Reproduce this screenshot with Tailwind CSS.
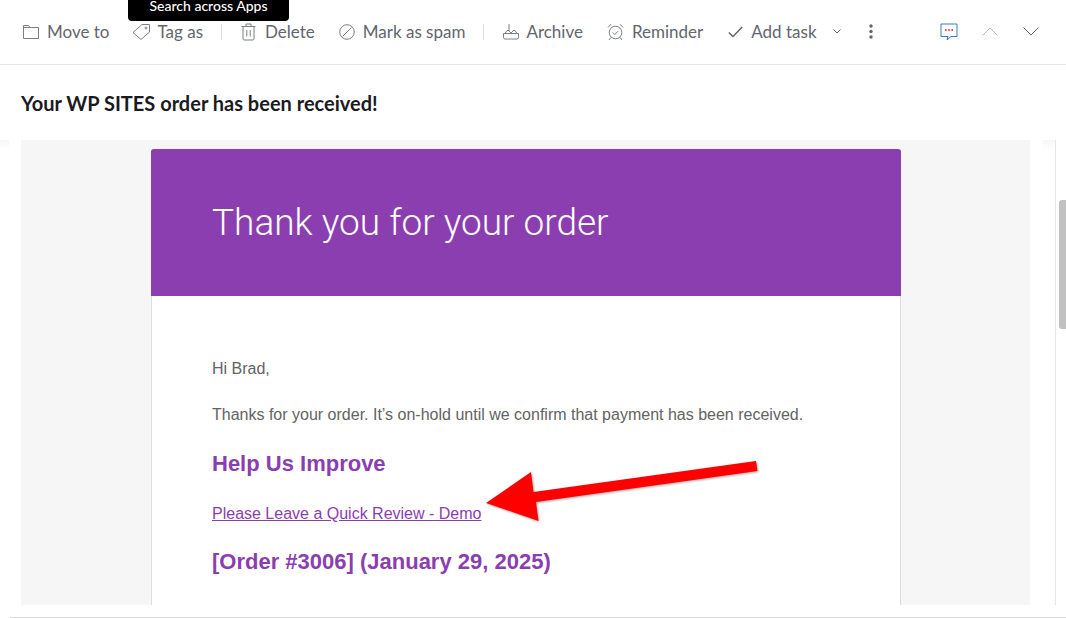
<!DOCTYPE html>
<html lang="en">
  <head>
    <meta charset="UTF-8" />
    <meta name="viewport" content="width=device-width, initial-scale=1.0" />
    <title>Your WP SITES order has been received!</title>
    <script src="https://cdn.jsdelivr.net/npm/@tailwindcss/browser@4"></script>
  </head>
  <body class="bg-white overflow-hidden font-['Lato',sans-serif]">
    <div class="relative w-[1066px] h-[618px] overflow-hidden">
      <!-- tooltip -->
      <div class="absolute left-[128px] top-[-10px] w-[161px] h-[31px] bg-black rounded-[4px] text-white text-[14px] font-medium flex items-center justify-center">
        Search across Apps
      </div>

      <!-- toolbar -->
      <div class="h-[65px] border-b border-[#e4e4e4] flex items-center pb-[1px] text-[17px] text-[#63656e] whitespace-nowrap">
        <svg class="ml-[23px] w-[16px] h-[16px]" viewBox="0 0 16 16" fill="none" stroke="#7d7f86" stroke-width="1"><path d="M.5 14.5V1.5h5l1.5 2h8.500v11z M.5 3.500H7"/></svg>
        <span class="ml-[8px]">Move to</span>
        <svg class="ml-[23px] w-[19px] h-[18px]" viewBox="0 0 19 18" fill="none" stroke="#7d7f86" stroke-width="1"><path d="M1 9.500 10 1.500h7.500v7.500L9 16.500Z"/><circle cx="14" cy="5" r="1"/></svg>
        <span class="ml-[6px]">Tag as</span>
        <div class="ml-[18px] w-[1px] h-[16px] bg-[#dcdcdc]"></div>
        <svg class="ml-[19px] w-[15px] h-[18px]" viewBox="0 0 15 18" fill="none" stroke="#7d7f86" stroke-width="1"><path d="M.5 3.500h14 M5 3.500V1h5v2.500 M2 3.500v12.500a1.200 1.200 0 0 0 1 1h9a1.200 1.200 0 0 0 1-1V3.500 M5.800 7v6.500 M9.200 7v6.500"/></svg>
        <span class="ml-[9px]">Delete</span>
        <svg class="ml-[24px] w-[16px] h-[16px]" viewBox="0 0 16 16" fill="none" stroke="#7d7f86" stroke-width="1"><circle cx="8" cy="8" r="7.300"/><path d="M3.500 12.500 12.500 3.500"/></svg>
        <span class="ml-[8px]">Mark as spam</span>
        <div class="ml-[18px] w-[1px] h-[16px] bg-[#dcdcdc]"></div>
        <svg class="ml-[19px] w-[16px] h-[17px]" viewBox="0 0 16 17" fill="none" stroke="#7d7f86" stroke-width="1"><path d="M.5 10.500h15v4a1.500 1.500 0 0 1-1.500 1.500H2a1.500 1.500 0 0 1-1.500-1.500z M2 10.500 4 7.500h2 M14 10.500 12 7.500h-2 M6 1v7l2 2 2-2 M6 1"/></svg>
        <span class="ml-[7px]">Archive</span>
        <svg class="ml-[24px] w-[17px] h-[18px]" viewBox="0 0 17 18" fill="none" stroke="#7d7f86" stroke-width="1"><circle cx="8.500" cy="9.500" r="6.300"/><path d="M1 4.500 4 1.200 M16 4.500 13 1.200 M3.800 14.500 2 17 M13.200 14.500 15 17 M5.800 9.500l2 2 3.500-3.500"/></svg>
        <span class="ml-[8px]">Reminder</span>
        <svg class="ml-[25px] w-[15px] h-[12px]" viewBox="0 0 15 12" fill="none" stroke="#63656e" stroke-width="1.500"><path d="M.8 6.500 5 10.500 14.200 1"/></svg>
        <span class="ml-[8px]">Add task</span>
        <svg class="ml-[16px] w-[8px] h-[5px]" viewBox="0 0 8 5" fill="none" stroke="#63656e" stroke-width="1"><path d="M.5.500 4 4 7.500.500"/></svg>
        <svg class="ml-[28px] w-[4px] h-[15px] mb-[1px]" viewBox="0 0 4 15" fill="#63656e"><circle cx="2" cy="2" r="1.700"/><circle cx="2" cy="7.500" r="1.700"/><circle cx="2" cy="13" r="1.700"/></svg>
        <svg class="ml-[67px] w-[18px] h-[18px]" viewBox="0 0 18 18" fill="none" stroke="#2f7cc9" stroke-width="1"><path d="M3.500 1H1v12.500h7L7 17l4-3.500h6V1h-2.500 M3.500 1H14.500"/><g fill="#e5262b" stroke="none"><circle cx="5.800" cy="7" r=".9"/><circle cx="9" cy="7" r=".9"/><circle cx="12.200" cy="7" r=".9"/></g></svg>
        <svg class="ml-[24px] w-[16px] h-[9px]" viewBox="0 0 16 9" fill="none" stroke="#b9bac0" stroke-width="1"><path d="M.5 8.500 8 1l7.500 7.500"/></svg>
        <svg class="ml-[25px] w-[16px] h-[9px]" viewBox="0 0 16 9" fill="none" stroke="#63656e" stroke-width="1"><path d="M.5.500 8 8 15.500.500"/></svg>
      </div>

      <!-- subject -->
      <div class="h-[75px] pl-[21px] pt-[25px] text-[20px] leading-[27px] font-bold text-[#1b1b1f]">
        Your WP SITES order has been received!
      </div>

      <!-- message -->
      <div class="relative h-[465px] ml-[21px] w-[1009px] bg-[#f6f6f6] pt-[9px] overflow-hidden font-['Liberation_Sans',sans-serif]">
        <div class="ml-[130px] w-[750px] h-[470px] bg-white border-x border-[#dedede] rounded-t-[3px]">
          <div class="-mx-[1px] h-[147px] bg-[#8b3eb0] rounded-t-[3px] pl-[61px] flex items-center text-white text-[37px] font-['Roboto',sans-serif] font-light">
            Thank you for your order
          </div>
          <div class="pl-[60px] pt-[60px] text-[#636363] text-[16px] leading-[26px]">
            <p>Hi Brad,</p>
            <p class="mt-[20px] w-[600px]">Thanks for your order. It’s on-hold until we confirm that payment has been received.</p>
            <h2 class="mt-[20px] text-[22px] leading-[32px] font-bold text-[#8b3eb0]">Help Us Improve</h2>
            <p class="mt-[21px]"><a class="text-[#8b3eb0] underline">Please Leave a Quick Review - Demo</a></p>
            <h2 class="mt-[19px] text-[22px] leading-[32px] font-bold text-[#8b3eb0]">[Order #3006] (January 29, 2025)</h2>
          </div>
        </div>
      </div>

      <!-- page edges -->
      <div class="absolute left-0 top-[140px] w-[9px] h-[10px] bg-gradient-to-b from-[#f6f6f6] to-white"></div>
      <div class="absolute left-[1043px] top-[140px] w-[13px] h-[10px] bg-gradient-to-b from-[#f6f6f6] to-white"></div>
      <div class="absolute left-[1055px] top-[140px] w-[1px] h-[465px] bg-[#e6e6e6]"></div>
      <div class="absolute left-[1059px] top-[200px] w-[8px] h-[129px] rounded-l-[3px] bg-[#c1c1c1]"></div>
      <div class="absolute left-[10px] right-0 top-[617px] h-[1px] bg-[#d8d8d8]"></div>

      <!-- arrow annotation -->
      <svg class="absolute left-[480px] top-[455px] w-[285px] h-[75px] drop-shadow-[1px_1px_1px_rgba(0,0,0,0.35)]" viewBox="480 455 285 75" fill="#fe0000">
        <path d="M756 461 757.500 471 536 502 538.500 521 486 503 531 472 533.500 492Z"/>
      </svg>
    </div>
  </body>
</html>
